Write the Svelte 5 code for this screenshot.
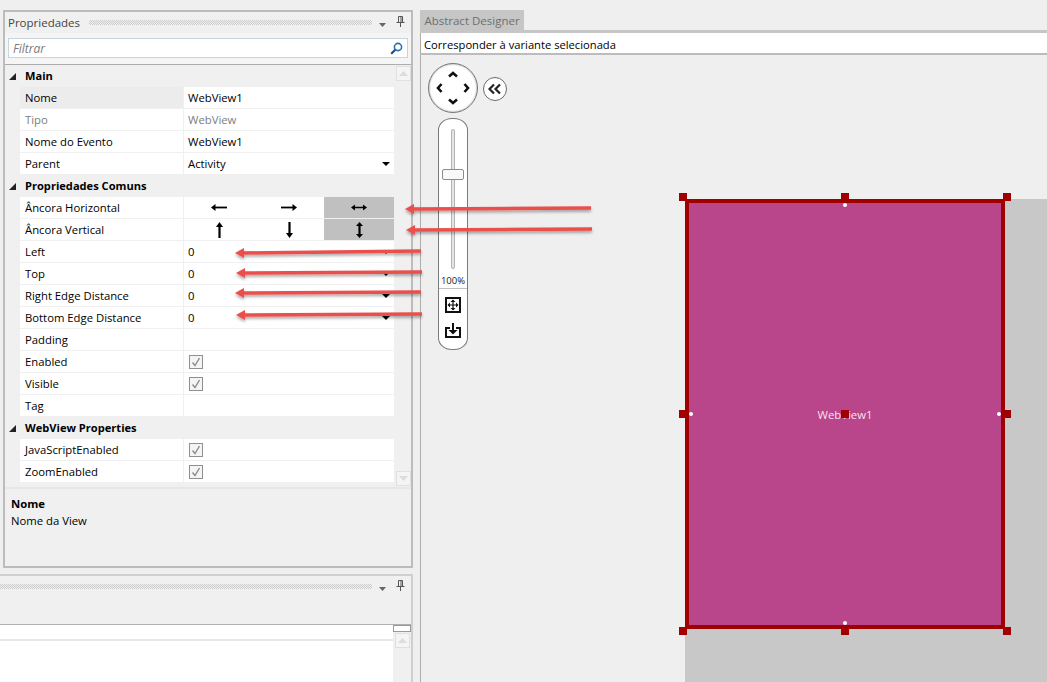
<script>
  const groups = [
    { title: 'Main', rows: [
      { name: 'Nome', value: 'WebView1', selected: true },
      { name: 'Tipo', value: 'WebView', muted: true },
      { name: 'Nome do Evento', value: 'WebView1' },
      { name: 'Parent', value: 'Activity', drop: true }
    ]},
    { title: 'Propriedades Comuns', rows: [
      { name: 'Âncora Horizontal', anchor: 'h' },
      { name: 'Âncora Vertical', anchor: 'v' },
      { name: 'Left', value: '0', drop: true },
      { name: 'Top', value: '0', drop: true },
      { name: 'Right Edge Distance', value: '0', drop: true },
      { name: 'Bottom Edge Distance', value: '0', drop: true },
      { name: 'Padding', value: '' },
      { name: 'Enabled', check: true },
      { name: 'Visible', check: true },
      { name: 'Tag', value: '' }
    ]},
    { title: 'WebView Properties', rows: [
      { name: 'JavaScriptEnabled', check: true },
      { name: 'ZoomEnabled', check: true }
    ]}
  ];
  const arrows = [
    [591, 208, 405, 209], [592, 229, 406, 230], [421, 251, 235, 253],
    [422, 272, 236, 273], [421, 292, 235, 293], [422, 314, 236, 315]
  ];
  const handles = [
    [679, 193], [841, 193], [1003, 193],
    [679, 410], [841, 410], [1003, 410],
    [679, 627], [841, 627], [1003, 627]
  ];
  const dots = [[843, 203], [843, 621], [689, 412], [997, 412]];
</script>

{#snippet pin()}
  <svg class="pin" width="9" height="11" viewBox="0 0 9 11"><path d="M2.500 .5h4v6h-4zM5 1v5M.5 6.500h8M4.500 7v4" fill="none" stroke="#555"/></svg>
{/snippet}
{#snippet caret()}
  <svg class="caret" width="8" height="4" viewBox="0 0 8 4"><path d="M0 0h7L3.500 4z" fill="#666"/></svg>
{/snippet}
{#snippet up()}
  <svg width="9" height="5" viewBox="0 0 9 5"><path d="M4.500 0L9 5H0z" fill="#dcdcdc"/></svg>
{/snippet}

<div class="root">
  <div class="left">
    <section class="panel props">
      <header class="head">
        <span class="title">Propriedades</span>
        <span class="dots"></span>
        {@render caret()}
        {@render pin()}
      </header>
      <div class="searchwrap">
        <div class="search">
          <span class="ph">Filtrar</span>
          <svg width="13" height="13" viewBox="0 0 13 13"><circle cx="8" cy="5" r="3.600" fill="none" stroke="#2a6fb5" stroke-width="1.600"/><path d="M5.300 7.700L1.200 11.800" stroke="#1c4f8f" stroke-width="2.200"/></svg>
        </div>
      </div>
      <div class="grid">
        <div class="rows">
          {#each groups as g}
            <div class="group">
              <svg width="7" height="7" viewBox="0 0 7 7"><path d="M7 0v7H0z" fill="#222"/></svg>
              <b>{g.title}</b>
            </div>
            {#each g.rows as r}
              <div class="row" class:muted={r.muted}>
                <div class="name" class:selected={r.selected}>{r.name}</div>
                <div class="value" class:anchored={r.anchor}>
                  {#if r.anchor === 'h'}
                    <div class="anc"><svg width="16" height="7" viewBox="0 0 16 7"><path d="M16 3.500H3" stroke="#000" stroke-width="1.800"/><path d="M0 3.500L4.500 0v7z"/></svg></div>
                    <div class="anc"><svg width="16" height="7" viewBox="0 0 16 7"><path d="M0 3.500H13" stroke="#000" stroke-width="1.800"/><path d="M16 3.500L11.500 0v7z"/></svg></div>
                    <div class="anc on"><svg width="16" height="7" viewBox="0 0 16 7"><path d="M3 3.500H13" stroke="#000" stroke-width="1.500"/><path d="M0 3.500L4 .5v6zM16 3.500L12 .5v6z"/></svg></div>
                  {:else if r.anchor === 'v'}
                    <div class="anc"><svg width="7" height="16" viewBox="0 0 7 16"><path d="M3.500 16V3" stroke="#000" stroke-width="2.200"/><path d="M3.500 0L7 5H0z"/></svg></div>
                    <div class="anc"><svg width="7" height="16" viewBox="0 0 7 16"><path d="M3.500 0V13" stroke="#000" stroke-width="2.200"/><path d="M3.500 16L7 11H0z"/></svg></div>
                    <div class="anc on"><svg width="7" height="16" viewBox="0 0 7 16"><path d="M3.500 3V13" stroke="#000" stroke-width="2.200"/><path d="M3.500 0L7 4H0zM3.500 16L7 12H0z"/></svg></div>
                  {:else if r.check}
                    <span class="check"><svg width="12" height="12" viewBox="0 0 12 12"><path d="M2.500 6.500L5 9.500L9.500 2" fill="none" stroke="#8c8c8c" stroke-width="1.400"/></svg></span>
                  {:else}
                    <span class="vtext">{r.value}</span>
                    {#if r.drop}<svg class="drop" width="8" height="4" viewBox="0 0 8 4"><path d="M0 0h8L4 4z"/></svg>{/if}
                  {/if}
                </div>
              </div>
            {/each}
          {/each}
        </div>
        <div class="scroll">
          <span class="sbtn">{@render up()}</span>
          <span class="sbtn down">{@render up()}</span>
        </div>
      </div>
      <div class="desc">
        <b>Nome</b>
        <span>Nome da View</span>
      </div>
    </section>

    <section class="panel lower">
      <header class="head">
        <span class="dots"></span>
        {@render caret()}
        {@render pin()}
      </header>
      <div class="band"></div>
      <div class="lowbody">
        <div class="lowmain"><div class="strip"></div></div>
        <div class="lowside">
          <span class="thumb"></span>
          <span class="sbtn">{@render up()}</span>
        </div>
      </div>
    </section>
  </div>

  <main class="designer">
    <div class="tab">Abstract Designer</div>
    <div class="bar"></div>
    <div class="combo">Corresponder à variante selecionada</div>
    <div class="canvas">
      <div class="nav">
        <svg width="50" height="50" viewBox="0 0 50 50"><path d="M21 13.500L25 10l4 3.500M21 36.500l4 3.500 4-3.500M13.500 21L10 25l3.500 4M36.500 21l3.500 4-3.500 4" fill="none" stroke="#111" stroke-width="2.600"/></svg>
      </div>
      <div class="collapse">
        <svg width="14" height="12" viewBox="0 0 14 12"><path d="M6 1.500L1.500 6 6 10.500M12 1.500L7.500 6l4.500 4.500" fill="none" stroke="#222" stroke-width="2.200"/></svg>
      </div>
      <div class="zoom">
        <div class="track"><span class="knob"></span></div>
        <div class="pct">100%</div>
        <div class="zbtns">
          <svg width="16" height="16" viewBox="0 0 16 16"><rect x="1" y="1" width="14" height="14" fill="#fff" stroke="#111" stroke-width="2"/><path d="M8 3.500v9M3.500 8h9" stroke="#111" stroke-width="1.200"/><path d="M8 2.500l2.500 2.500h-5zM8 13.500l2.500-2.500h-5zM2.500 8L5 5.500v5zM13.500 8L11 5.500v5z" fill="#111"/></svg>
          <svg width="16" height="15" viewBox="0 0 16 15"><path d="M5 5H1v9h14V5h-4" fill="none" stroke="#111" stroke-width="2"/><path d="M8 0v8" stroke="#111" stroke-width="2"/><path d="M8 11.500L3.500 7h9z" fill="#111"/></svg>
        </div>
      </div>
    </div>
  </main>

  <div class="device"></div>
  <div class="widget">WebView1</div>
  {#each dots as d}<span class="dot" style="left:{d[0]}px;top:{d[1]}px"></span>{/each}
  {#each handles as h}<span class="handle" style="left:{h[0]}px;top:{h[1]}px"></span>{/each}

  <svg class="arrows" width="1047" height="682" viewBox="0 0 1047 682">
    <defs>
      <filter id="sh" x="-5%" y="-300%" width="110%" height="700%"><feDropShadow dx="0" dy="2" stdDeviation="1.500" flood-color="#000" flood-opacity=".35"/></filter>
    </defs>
    {#each arrows as a}
      <g filter="url(#sh)">
        <path d="M{a[0]} {a[1]}L{a[2] + 6} {a[3]}" stroke="#ea4f4c" stroke-width="3.500"/>
        <path d="M{a[2]} {a[3]}l9 -5v10z" fill="#ea4f4c"/>
      </g>
    {/each}
  </svg>
</div>

<style>
  :global(body) { margin: 0; background: #efefef; }
  .root {
    position: relative;
    display: flex;
    width: 1047px;
    height: 682px;
    overflow: hidden;
    background: #efefef;
    color: #000;
    font: 11.3px/1 "Open Sans", "Noto Sans", sans-serif;
  }
  .left {
    width: 420px;
    flex: none;
    box-sizing: border-box;
    padding: 10px 7px 0 3px;
    display: flex;
    flex-direction: column;
  }
  .panel { box-sizing: border-box; border: 2px solid #bcbcbc; background: #f0f0f0; }
  .props { height: 558px; display: flex; flex-direction: column; }
  .head {
    display: flex;
    align-items: center;
    gap: 7px;
    height: 21px;
    flex: none;
    padding: 0 6px 0 3px;
    color: #444;
    font-size: 11.5px;
  }
  .dots {
    flex: 1;
    height: 5px;
    background-image: repeating-conic-gradient(#cbcbcb 0 25%, transparent 0 50%);
    background-size: 2px 2px;
  }
  .title { margin-right: 2px; }
  .pin { margin-top: -2px; margin-left: 2px; }
  .caret { margin-top: 4px; }
  .searchwrap { background: #f5f5f5; padding: 5px 3px 6px; height: 32px; box-sizing: border-box; flex: none; border-bottom: 1px solid #adadad; }
  .search {
    box-sizing: border-box;
    height: 20px;
    border: 1px solid #c9d3dc;
    background: #fff;
    display: flex;
    align-items: center;
    justify-content: space-between;
    padding: 0 4px;
    color: #7b7b7b;
  }
  .ph { font-style: italic; font-size: 12px; padding-top: 1px; }
  .grid { display: flex; height: 422px; flex: none; border-bottom: 2px solid #e6e6e6; }
  .rows { width: 389px; flex: none; }
  .group { height: 22px; display: flex; align-items: center; gap: 9px; padding-left: 4px; }
  .group b { font-size: 11.1px; }
  .row { height: 21px; margin-bottom: 1px; margin-left: 15px; display: flex; }
  .name { width: 163px; background: #fff; display: flex; align-items: center; padding: 1px 0 0 5px; box-sizing: border-box; margin-right: 1px; flex: none; }
  .name.selected { background: #ececec; }
  .value { flex: 1; background: #fff; display: flex; align-items: center; position: relative; padding: 1px 0 0 4px; }
  .value.anchored { padding: 0; }
  .muted { color: #7d7d7d; }
  .drop { position: absolute; right: 4px; top: 9px; }
  .anc { display: flex; align-items: center; justify-content: center; width: 70px; height: 21px; flex: none; }
  .anc.on { background: #c0c0c0; }
  .check {
    box-sizing: border-box;
    width: 14px;
    height: 14px;
    margin: -1px 0 0 1px;
    border: 1px solid #8f8f8f;
    background: #f4f4f4;
    display: flex;
    align-items: center;
    justify-content: center;
  }
  .scroll { flex: 1; display: flex; flex-direction: column; justify-content: space-between; padding: 1px 0 1px 2px; }
  .sbtn {
    box-sizing: border-box;
    display: flex;
    align-items: center;
    justify-content: center;
    width: 15px;
    height: 15px;
    background: #f4f4f4;
    border: 1px solid #e0e0e0;
  }
  .sbtn.down svg { transform: rotate(180deg); }
  .desc { flex: 1; display: flex; flex-direction: column; gap: 6px; padding: 9px 6px; }

  .lower { flex: 1; margin: 6px 0 0 -4px; border-left: 0; border-bottom: 0; border-color: #cfcfcf; display: flex; flex-direction: column; }
  .lower .head { padding-left: 0; }
  .band { height: 27px; flex: none; border-bottom: 1px solid #b0b0b0; }
  .lowbody { flex: 1; display: flex; }
  .lowmain { width: 394px; flex: none; background: #fff; }
  .strip { height: 13px; margin-top: 1px; border-bottom: 2px solid #e8e8e8; }
  .lowside { flex: 1; padding-left: 2px; display: flex; flex-direction: column; }
  .thumb { display: block; margin: 0 0 1px -2px; background: #fff; border: 1px solid #999; box-sizing: border-box; width: 18px; height: 7px; }

  .designer { flex: 1; display: flex; flex-direction: column; padding-top: 10px; min-width: 0; }
  .tab {
    align-self: flex-start;
    box-sizing: border-box;
    height: 20px;
    width: 104px;
    padding-top: 2px;
    background: #c6c6c6;
    color: #6f6f6f;
    display: flex;
    align-items: center;
    justify-content: center;
    font-size: 11.5px;
  }
  .bar { height: 3px; background: #c6c6c6; flex: none; }
  .combo {
    box-sizing: border-box;
    height: 22px;
    flex: none;
    background: #fff;
    border-left: 1px solid #adadad;
    border-bottom: 2px solid #bcbcbc;
    padding: 3px 3px 0;
    display: flex;
    align-items: center;
    font-size: 11.2px;
  }
  .canvas { flex: 1; border-left: 1px solid #adadad; position: relative; }
  .nav {
    position: absolute;
    left: 7px;
    top: 8px;
    width: 50px;
    height: 50px;
    border-radius: 50%;
    box-sizing: border-box;
    background: radial-gradient(circle, #fff 70%, #e6e6e6 100%);
    border: 1px solid #777;
    box-shadow: inset 0 0 2px #888;
    display: flex;
    align-items: center;
    justify-content: center;
  }
  .nav svg { flex: none; }
  .collapse {
    position: absolute;
    left: 62px;
    top: 22px;
    width: 24px;
    height: 24px;
    box-sizing: border-box;
    border: 1px solid #6a6a6a;
    border-radius: 50%;
    background: #fff;
    display: flex;
    align-items: center;
    justify-content: center;
  }
  .zoom {
    position: absolute;
    left: 17px;
    top: 63px;
    width: 30px;
    height: 232px;
    box-sizing: border-box;
    border: 1px solid #7a7a7a;
    border-radius: 14px / 12px;
    background: #fff;
    display: flex;
    flex-direction: column;
    align-items: center;
  }
  .track {
    position: relative;
    margin-top: 10px;
    width: 4px;
    height: 140px;
    box-sizing: border-box;
    background: #e4e4e4;
    border: 1px solid #b4b4b4;
    border-radius: 2px;
    flex: none;
  }
  .knob {
    position: absolute;
    left: -10px;
    top: 39px;
    width: 22px;
    height: 11px;
    box-sizing: border-box;
    background: #f8f8f8;
    border: 1px solid #8c8c8c;
    border-radius: 2px;
  }
  .pct { font-size: 9.500px; margin-top: 7px; height: 12px; color: #222; }
  .zbtns {
    align-self: stretch;
    border-top: 1px solid #c0c0c0;
    padding-top: 8px;
    display: flex;
    flex-direction: column;
    align-items: center;
    gap: 10px;
  }

  .device { position: absolute; left: 685px; top: 199px; right: 0; bottom: 0; background: #c8c8c8; }
  .widget {
    position: absolute;
    left: 685px;
    top: 199px;
    width: 320px;
    height: 430px;
    box-sizing: border-box;
    border: 4px solid #a00000;
    background: #b9458a;
    color: #f4e4ee;
    display: flex;
    align-items: center;
    justify-content: center;
    padding-top: 1px;
  }
  .handle { position: absolute; width: 8px; height: 8px; background: #a00000; }
  .dot { position: absolute; width: 4px; height: 4px; border-radius: 50%; background: #fff; }
  .arrows { position: absolute; left: 0; top: 0; pointer-events: none; }
</style>
